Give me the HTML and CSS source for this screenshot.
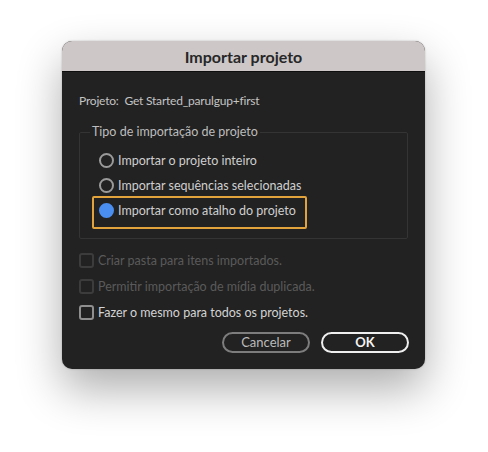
FILE: index.html
```html
<!DOCTYPE html>
<html lang="pt">
<head>
<meta charset="utf-8">
<title>Importar projeto</title>
<link rel="stylesheet" href="styles.css">
</head>
<body>
<div class="dialog">
  <div class="titlebar">Importar projeto</div>
  <div class="content">
    <div class="project-line">Projeto:&nbsp; Get Started_parulgup+first</div>
    <fieldset class="group">
      <legend class="group-title">Tipo de importação de projeto</legend>
      <div class="radio-row"><span class="radio"></span><span class="label">Importar o projeto inteiro</span></div>
      <div class="radio-row"><span class="radio"></span><span class="label">Importar sequências selecionadas</span></div>
      <div class="radio-row focused"><span class="radio checked"></span><span class="label">Importar como atalho do projeto</span></div>
    </fieldset>
    <div class="check-row disabled"><span class="checkbox"></span><span class="label">Criar pasta para itens importados.</span></div>
    <div class="check-row disabled"><span class="checkbox"></span><span class="label">Permitir importação de mídia duplicada.</span></div>
    <div class="check-row"><span class="checkbox"></span><span class="label">Fazer o mesmo para todos os projetos.</span></div>
    <div class="buttons">
      <div class="btn btn-cancel">Cancelar</div>
      <div class="btn btn-ok">OK</div>
    </div>
  </div>
</div>
</body>
</html>
```
FILE: styles.css
```css
html, body {
  margin: 0;
  padding: 0;
  background: #ffffff;
}
body {
  font-family: Lato, "Liberation Sans", sans-serif;
  font-size: 12.5px;
  min-height: 452px;
  padding-top: 41px;
  box-sizing: border-box;
}
.dialog {
  margin: 0 0 0 62px;
  width: 363px;
  height: 328px;
  border-radius: 10px;
  overflow: hidden;
  background: #222222;
  box-shadow: 0 20px 45px rgba(0, 0, 0, 0.32), 0 0 2px rgba(0, 0, 0, 0.25);
  display: flex;
  flex-direction: column;
}
.titlebar {
  height: 30px;
  line-height: 31px;
  background: #cdc8c7;
  border-bottom: 1px solid #0e0e0e;
  text-align: center;
  font-weight: 700;
  font-size: 16px;
  color: #272727;
}
.content {
  flex: 1;
  padding: 21px 16px 16px 17px;
  display: flex;
  flex-direction: column;
}
.project-line {
  height: 16px;
  line-height: 16px;
  font-size: 12px;
  letter-spacing: -0.2px;
  color: #c4c4c4;
}
.group {
  margin: 15px 1px 0 0;
  padding: 8px 10px 15px 19px;
  border: 1px solid #343434;
  border-radius: 2px;
  min-width: 0;
}
.group-title {
  margin-left: -9px;
  padding: 0 2px;
  height: 16px;
  line-height: 16px;
  color: #bdbdbd;
}
.radio-row {
  position: relative;
  display: flex;
  align-items: center;
  width: fit-content;
  height: 25px;
  color: #cfcfcf;
}
.radio {
  box-sizing: border-box;
  width: 15px;
  height: 15px;
  border-radius: 50%;
  border: 2px solid #9a9a9a;
  margin-right: 4px;
  flex: none;
}
.radio.checked {
  border-color: #4a8ef0;
  background: #4a8ef0;
}
.focused::after {
  content: "";
  position: absolute;
  top: -2px;
  bottom: -6px;
  left: -7px;
  right: -11px;
  border: 2px solid #e3a33c;
  border-radius: 2px;
}
.check-row {
  display: flex;
  align-items: center;
  height: 26px;
  color: #d3d3d3;
}
.group + .check-row {
  margin-top: 8px;
}
.checkbox {
  box-sizing: border-box;
  width: 15px;
  height: 15px;
  border: 2px solid #8f8f8f;
  border-radius: 3px;
  margin-right: 4px;
  flex: none;
}
.check-row.disabled {
  color: #5a5a5a;
}
.check-row.disabled .checkbox {
  border-color: #3c3c3c;
}
.buttons {
  margin-top: 7px;
  display: flex;
  justify-content: flex-end;
  gap: 11px;
}
.btn {
  box-sizing: border-box;
  width: 88px;
  height: 21px;
  border-radius: 11px;
  border: 2px solid;
  text-align: center;
  line-height: 17px;
  font-size: 13px;
}
.btn-cancel {
  border-color: #7d7d7d;
  color: #bcbcbc;
}
.btn-ok {
  border-color: #efefef;
  color: #f4f4f4;
  font-weight: 700;
}
```
